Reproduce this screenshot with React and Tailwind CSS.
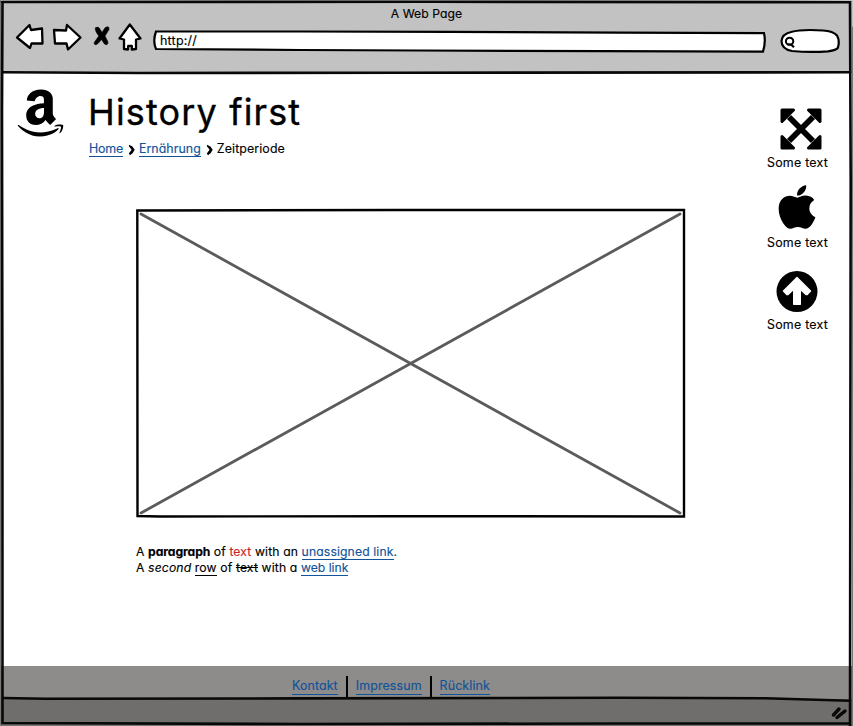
import { FaAmazon, FaApple } from "react-icons/fa";

const link = "border-b border-[#10539a] text-[#10539a]";

function NavIcons() {
  return (
    <svg className="h-[36px] w-[130px] shrink-0" viewBox="14 18 130 36" fill="white" stroke="black" strokeWidth="2.3" strokeLinejoin="round" strokeLinecap="round">
      <path d="M17 37.5 L29.5 25 L31 30 L42 28.5 L42.5 43.5 L31.5 43.5 L30 48 Z" />
      <path d="M54 30 L66 30.5 L67 25 L80.5 37.5 L68 49.5 L66.5 43.5 L55 43.5 Z" />
      <path d="M129.8 24.5 L140.5 38.5 L136 39.5 L136 49 L131.8 49.5 L131.8 45.8 L128.2 45.8 L128 49.5 L124 49 L124 39.5 L119.5 38.5 Z" />
      <path d="M95.5 28 Q98.5 25.5 100.5 30 L102 32.5 L105 27.8 Q109.5 25 109 29.5 L105 36 L108 42 Q108 46 104.5 44 L101.5 39.5 L98 43.5 Q94 46.5 94.2 42.5 L98.8 36 Q94.5 30.5 95.5 28 Z" fill="black" stroke="black" strokeWidth="0.6" />
    </svg>
  );
}

function Browser() {
  return (
    <header className="flex h-[73px] shrink-0 flex-col bg-[#c2c2c2]">
      <div className="flex h-[18px] justify-center pt-[6px] text-[12.2px] leading-[16px]">
        <span className="tracking-[0.06px]">A Web Page</span>
      </div>
      <div className="flex h-[36px] pl-[14px]">
        <NavIcons />
        <div className="relative ml-[8px] h-[36px] w-[616px] shrink-0">
          <svg className="absolute inset-0 h-[36px] w-[616px]" viewBox="152 18 616 36" fill="white" stroke="black" strokeWidth="2.2">
            <path d="M156 31.5 L300 31.5 L450 31.8 L620 32.7 L764 33.2 Q766 42 763 51.6 L600 51.1 L420 50.5 L300 50 L156 49 Q152.5 41 156 31.5 Z" />
          </svg>
          <span className="relative ml-[8px] mt-[15px] block text-[12.5px] leading-[16px] tracking-[0.22px]">http://</span>
        </div>
        <svg className="ml-[10px] h-[36px] w-[64px] shrink-0" viewBox="778 18 64 36" fill="white" stroke="black" strokeWidth="2.2">
          <path d="M791 32 Q802 29 823 30.5 Q833 31 837 35.5 Q840 41 838 47.5 Q837 50 828 51.3 Q810 52.7 792 51 Q781.5 49 781.5 41 Q782 34 791 32 Z" />
          <ellipse cx="789.6" cy="41.2" rx="3.7" ry="3.5" strokeWidth="2" />
          <path d="M787.5 44.5 L791 44.5 L794 47.3" strokeWidth="2.2" fill="none" />
        </svg>
      </div>
    </header>
  );
}

function Chevron() {
  return (
    <svg className="ml-[5px] mr-[5px] mt-[3px] h-[12px] w-[7px] shrink-0" viewBox="0 0 7 12">
      <path d="M1 0.8 Q5 2 6.7 5.7 Q5 9.8 2 11.3 L0.8 9.6 L3.6 5.8 L0.9 2.3 Z" />
    </svg>
  );
}

function ExpandIcon() {
  return (
    <svg className="ml-[13px] mt-[3px] h-[42px] w-[42px]" viewBox="0 0 42 42" stroke="black" strokeLinejoin="round">
      <path d="M9 9 L33 33 M33 9 L9 33" strokeWidth="5.8" />
      <path d="M2 2 H13.5 L2 13.5 Z M40 2 H28.5 L40 13.5 Z M2 40 H13.5 L2 28.5 Z M40 40 H28.5 L40 28.5 Z" strokeWidth="3" />
    </svg>
  );
}

function UpIcon() {
  return (
    <svg className="ml-[9px] mt-[19px] h-[42px] w-[42px]" viewBox="0 0 42 42">
      <circle cx="21" cy="21.5" r="20.5" />
      <path d="M21 7.5 L34.5 21 L31.2 24.6 L30 24.6 L24.3 19.3 V34.2 H17.7 V19.3 L12 24.6 L10.8 24.6 L7.5 21 Z" fill="white" stroke="white" strokeWidth="1.4" strokeLinejoin="round" />
    </svg>
  );
}

function Sidebar() {
  return (
    <aside className="flex w-[62px] flex-col text-[12.4px] leading-[16px] tracking-[0.24px]">
      <ExpandIcon />
      <span className="mt-[5px] whitespace-nowrap">Some text</span>
      <FaApple className="ml-[11px] mt-[11px] h-[50px] w-[38px]" />
      <span className="mt-[3px] whitespace-nowrap">Some text</span>
      <UpIcon />
      <span className="mt-[5px] whitespace-nowrap">Some text</span>
    </aside>
  );
}

function Frame() {
  return (
    <svg className="pointer-events-none absolute inset-0 h-[726px] w-[853px]" viewBox="0 0 853 726" fill="none" stroke="#080808" strokeWidth="2.6" strokeLinecap="round">
      <path d="M0.5 0 V726 M852.5 27 V726 M0 725.6 H853" stroke="#777" strokeWidth="1" />
      <path d="M2 2 L430 1.8 L850 2.2 L850.7 180 L850 726 M2.5 2 L2 110 L2.4 400 L2.5 723 L300 724 L620 723.5 L850 723.5" />
      <path d="M3 72.3 L140 73 L400 72.7 L850 72.3" />
      <path d="M3 698 L45 698.8 L300 698.4 L620 697.7 L765 698.3 L850 700.8" />
      <path d="M833.5 715 L839 709 M837 717.5 L845 711" strokeWidth="3.5" />
    </svg>
  );
}

export default function App() {
  return (
    <div className="relative flex h-[726px] w-[853px] flex-col overflow-hidden bg-white text-black [font-family:Inter,'Open_Sans',sans-serif] [font-feature-settings:'cv11','ss03'] [-webkit-text-stroke:0.15px]">
      <Browser />
      <main className="flex h-[593px] shrink-0 pl-[17px]">
        <FaAmazon className="mt-[13px] h-[54px] w-[47px] shrink-0" />
        <div className="ml-[25px] w-[678px] shrink-0">
          <h1 className="-ml-px mt-[15px] h-[48px] whitespace-nowrap text-[36px] leading-[48px] tracking-[1.15px] [-webkit-text-stroke:0.35px]">History first</h1>
          <nav className="mt-[5px] flex h-[18px] whitespace-nowrap text-[12.4px] leading-[15px]">
            <span className={`h-[16px] tracking-[-0.2px] ${link}`}>Home</span>
            <Chevron />
            <span className={`-ml-px h-[16px] tracking-[0.05px] ${link}`}>Ernährung</span>
            <Chevron />
            <span className="-ml-px tracking-[0.1px]">Zeitperiode</span>
          </nav>
          <svg className="ml-[46px] mt-[49px] h-[310px] w-[552px]" viewBox="135 208 552 310" fill="none">
            <path d="M141 214 L680 513 M680 214 L141 513" stroke="#5b5b5b" strokeWidth="2.8" strokeLinecap="round" />
            <path d="M137.3 210.5 L400 210 L684 210 L684 516.5 L400 516.2 L160 516.5 L137.5 516 Z" stroke="black" strokeWidth="2.4" />
          </svg>
          <div className="ml-[47px] mt-[26px] whitespace-nowrap text-[12.2px] leading-[16px] tracking-[0.12px]">
            <p>A <b className="tracking-[-0.1px]">paragraph</b> of <span className="text-[#d01f1f]">text</span> with an <span className={link}>unassigned link</span><span className="text-[#10539a]">.</span></p>
            <p className="tracking-[0.13px]">A <i>second</i> <span className="border-b border-black">row</span> of <s>text</s> with a <span className={`tracking-[0px] ${link}`}>web link</span></p>
          </div>
        </div>
        <div className="mt-[32px]"><Sidebar /></div>
      </main>
      <footer className="flex h-[60px] shrink-0 flex-col">
        <div className="flex h-[33px] items-end bg-[#8d8c8a] pl-[292px] text-[12.4px] leading-[16px] tracking-[0.12px]">
          <span className={`mb-[4px] ${link}`}>Kontakt</span>
          <i className="mx-[8px] h-[23px] w-[2px] bg-black" />
          <span className={`mb-[4px] ${link}`}>Impressum</span>
          <i className="mx-[8px] h-[23px] w-[2px] bg-black" />
          <span className={`mb-[4px] ${link}`}>Rücklink</span>
        </div>
        <div className="h-[27px] bg-[#6f6e6c]" />
      </footer>
      <Frame />
    </div>
  );
}
